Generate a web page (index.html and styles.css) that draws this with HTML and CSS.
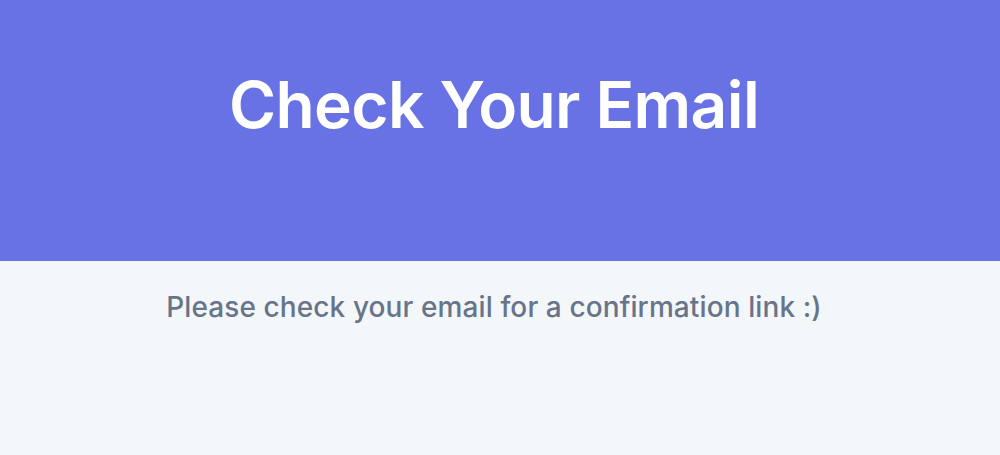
FILE: index.html
```html
<!DOCTYPE html>
<html lang="en">
<head>
<meta charset="utf-8">
<title>Check Your Email</title>
<link rel="stylesheet" href="styles.css">
</head>
<body>
  <header class="hero">
    <h1 class="hero-title">Check Your Email</h1>
  </header>
  <main class="content">
    <p class="message">Please check your email for a confirmation link :)</p>
  </main>
</body>
</html>
```
FILE: styles.css
```css
html, body {
  margin: 0;
  padding: 0;
}
body {
  background: #f4f7fa;
  font-family: Inter, "Noto Sans", sans-serif;
  min-height: 455px;
}
.hero {
  background: #6872e5;
  height: 261px;
  display: flex;
  justify-content: center;
  box-sizing: border-box;
  padding: 66px 12px 0 0;
}
.hero-title {
  margin: 0;
  color: #ffffff;
  font-size: 64px;
  font-weight: 600;
  line-height: 78px;
  letter-spacing: -0.6px;
}
.content {
  display: flex;
  justify-content: center;
  padding: 26px 12px 0 0;
}
.message {
  margin: 0;
  color: #677489;
  font-size: 28px;
  font-weight: 500;
  line-height: 40px;
  letter-spacing: 0.1px;
}
```
